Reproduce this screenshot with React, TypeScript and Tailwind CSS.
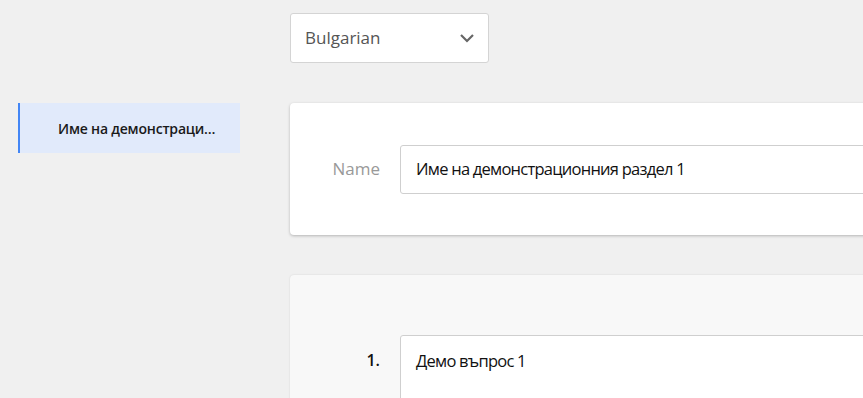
import React from "react";

export default function App() {
  return (
    <div
      className="w-[863px] h-[398px] overflow-hidden bg-[#f0f0f0] flex"
      style={{ fontFamily: '"Open Sans", "Noto Sans", sans-serif' }}
    >
      <div className="w-[240px] shrink-0 pl-[18px] pt-[103px]">
        <div className="h-[50px] bg-[#e1eafb] border-l-2 border-[#4386f5] pl-[38px] pr-[18px] flex items-center">
          <span className="truncate text-[14px] font-semibold text-[#1a1a1a] tracking-[-0.2px]">
            Име на демонстрационния раздел 1
          </span>
        </div>
      </div>
      <div className="flex-1 ml-[50px] pt-[13px] min-w-0">
        <div className="w-[199px] h-[50px] bg-white border border-[#d4d4d4] rounded-[3px] flex items-center justify-between pl-[14px] pr-[13px]">
          <span className="text-[17px] text-[#555]">Bulgarian</span>
          <svg width="16" height="10" viewBox="0 0 16 10" fill="none">
            <path d="M2 2 L8 8 L14 2" stroke="#666" strokeWidth="2.2" />
          </svg>
        </div>
        <div className="mt-[40px] w-[600px] h-[132px] bg-white rounded-[4px] shadow-[0_1px_3px_rgba(0,0,0,0.25)] flex items-center">
          <div className="w-[90px] text-right text-[17px] text-[#999]">Name</div>
          <div className="ml-[20px] flex-1 h-[49px] border border-[#cfcfcf] rounded-[3px] flex items-center pl-[15px] text-[16.5px] text-[#111] tracking-[-0.75px]">
            Име на демонстрационния раздел 1
          </div>
        </div>
        <div className="mt-[40px] w-[600px] h-[200px] bg-[#f8f8f8] rounded-[4px] shadow-[0_0_2px_rgba(0,0,0,0.12)] pt-[60px] flex items-start">
          <div className="w-[90px] text-right text-[16px] font-semibold text-[#111] pt-[13px]">1.</div>
          <div className="ml-[20px] flex-1 h-[100px] bg-white border border-[#cfcfcf] rounded-[3px] pl-[15px] pt-[13px] text-[16.5px] text-[#111] tracking-[-0.75px]">
            Демо въпрос 1
          </div>
        </div>
      </div>
    </div>
  );
}
